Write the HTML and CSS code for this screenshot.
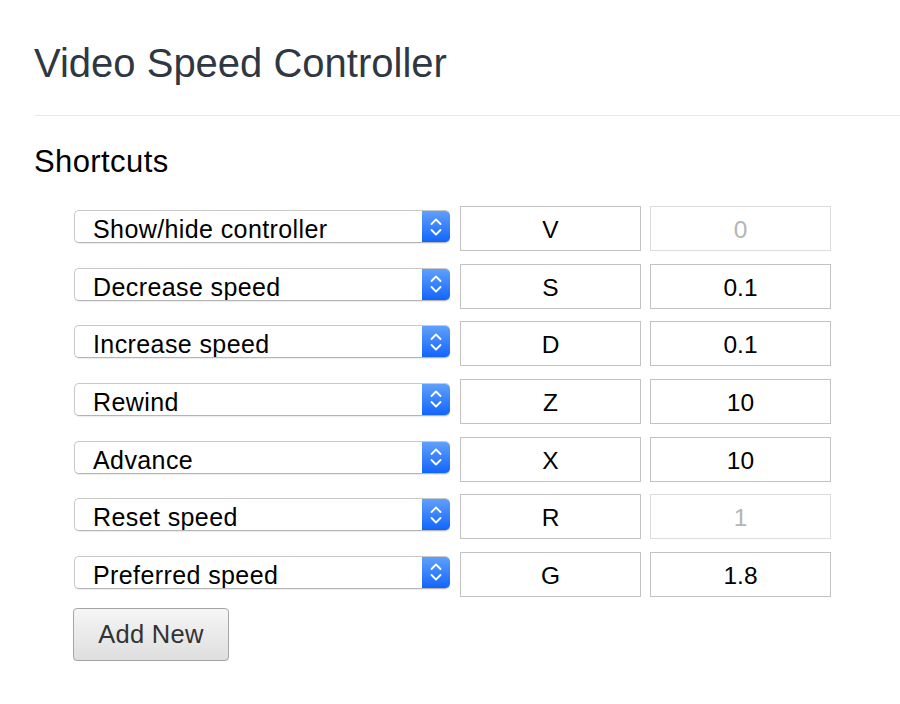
FILE: index.html
```html
<!DOCTYPE html>
<html>
<head>
<meta charset="utf-8">
<link rel="stylesheet" href="styles.css">
</head>
<body>
<div class="page">
  <h1 class="title">Video Speed Controller</h1>
  <div class="rule"></div>
  <h2 class="section">Shortcuts</h2>
  <div class="shortcuts">
    <div class="row">
      <div class="select"><span class="select-label">Show/hide controller</span><span class="select-arrow"><svg width="12" height="20" viewBox="0 0 12 20"><path d="M1.5 7 L6 2.5 L10.5 7 M1.5 13 L6 17.5 L10.5 13" fill="none" stroke="#fff" stroke-width="1.8" stroke-linecap="round" stroke-linejoin="round"/></svg></span></div>
      <div class="field">V</div>
      <div class="field disabled">0</div>
    </div>
    <div class="row">
      <div class="select"><span class="select-label">Decrease speed</span><span class="select-arrow"><svg width="12" height="20" viewBox="0 0 12 20"><path d="M1.5 7 L6 2.5 L10.5 7 M1.5 13 L6 17.5 L10.5 13" fill="none" stroke="#fff" stroke-width="1.8" stroke-linecap="round" stroke-linejoin="round"/></svg></span></div>
      <div class="field">S</div>
      <div class="field">0.1</div>
    </div>
    <div class="row">
      <div class="select"><span class="select-label">Increase speed</span><span class="select-arrow"><svg width="12" height="20" viewBox="0 0 12 20"><path d="M1.5 7 L6 2.5 L10.5 7 M1.5 13 L6 17.5 L10.5 13" fill="none" stroke="#fff" stroke-width="1.8" stroke-linecap="round" stroke-linejoin="round"/></svg></span></div>
      <div class="field">D</div>
      <div class="field">0.1</div>
    </div>
    <div class="row">
      <div class="select"><span class="select-label">Rewind</span><span class="select-arrow"><svg width="12" height="20" viewBox="0 0 12 20"><path d="M1.5 7 L6 2.5 L10.5 7 M1.5 13 L6 17.5 L10.5 13" fill="none" stroke="#fff" stroke-width="1.8" stroke-linecap="round" stroke-linejoin="round"/></svg></span></div>
      <div class="field">Z</div>
      <div class="field">10</div>
    </div>
    <div class="row">
      <div class="select"><span class="select-label">Advance</span><span class="select-arrow"><svg width="12" height="20" viewBox="0 0 12 20"><path d="M1.5 7 L6 2.5 L10.5 7 M1.5 13 L6 17.5 L10.5 13" fill="none" stroke="#fff" stroke-width="1.8" stroke-linecap="round" stroke-linejoin="round"/></svg></span></div>
      <div class="field">X</div>
      <div class="field">10</div>
    </div>
    <div class="row">
      <div class="select"><span class="select-label">Reset speed</span><span class="select-arrow"><svg width="12" height="20" viewBox="0 0 12 20"><path d="M1.5 7 L6 2.5 L10.5 7 M1.5 13 L6 17.5 L10.5 13" fill="none" stroke="#fff" stroke-width="1.8" stroke-linecap="round" stroke-linejoin="round"/></svg></span></div>
      <div class="field">R</div>
      <div class="field disabled">1</div>
    </div>
    <div class="row">
      <div class="select"><span class="select-label">Preferred speed</span><span class="select-arrow"><svg width="12" height="20" viewBox="0 0 12 20"><path d="M1.5 7 L6 2.5 L10.5 7 M1.5 13 L6 17.5 L10.5 13" fill="none" stroke="#fff" stroke-width="1.8" stroke-linecap="round" stroke-linejoin="round"/></svg></span></div>
      <div class="field">G</div>
      <div class="field">1.8</div>
    </div>
    <div class="add-btn">Add New</div>
  </div>
</div>
</body>
</html>
```
FILE: styles.css
```css
html, body {
  margin: 0;
  padding: 0;
  background: #ffffff;
}
body {
  font-family: "Liberation Sans", Arial, Helvetica, sans-serif;
  color: #000;
}
.page {
  padding: 40px 0 0 34px;
}
.title {
  margin: 0;
  font-size: 40px;
  font-weight: normal;
  line-height: 46px;
  color: #2f3842;
}
.rule {
  height: 1px;
  background: #e8e8e8;
  margin-top: 29px;
}
.section {
  margin: 28px 0 0 0;
  font-size: 31px;
  letter-spacing: 0.4px;
  font-weight: normal;
  line-height: 36px;
  color: #000;
}
.shortcuts {
  padding-left: 40px;
  margin-top: 26px;
}
.row {
  display: flex;
  align-items: flex-start;
  height: 45px;
  margin-bottom: 12.67px;
}
.select {
  box-sizing: border-box;
  width: 376px;
  height: 33px;
  margin-top: 4px;
  margin-right: 10px;
  display: flex;
  align-items: stretch;
  border: 1px solid #c9c9c9;
  border-bottom-color: #b5b5b5;
  border-right: none;
  border-radius: 5px;
  background: #fff;
  box-shadow: 0 1px 1px rgba(0,0,0,0.08);
  overflow: hidden;
}
.select-label {
  flex: 1;
  font-size: 25px;
  letter-spacing: 0.4px;
  line-height: 31px;
  padding-top: 3px;
  padding-left: 18px;
  color: #000;
}
.select-arrow {
  width: 28px;
  display: flex;
  align-items: center;
  justify-content: center;
  background: linear-gradient(#62a2fb, #0f63fc);
  margin: -1px 0 -1px 0;
  border-radius: 0 5px 5px 0;
}
.field {
  box-sizing: border-box;
  width: 181px;
  height: 45px;
  margin-right: 9px;
  border: 1px solid #c2c2c2;
  text-align: center;
  font-size: 24.5px;
  line-height: 45px;
  color: #000;
  background: #fff;
}
.field.disabled {
  color: #b5b5b5;
  border-color: #dcdcdc;
}
.add-btn {
  box-sizing: border-box;
  width: 156px;
  height: 53px;
  margin-left: -1px;
  margin-top: -2px;
  border: 1px solid #a6a6a6;
  border-radius: 4px;
  background: linear-gradient(#f6f6f6, #dedede);
  box-shadow: 0 1px 1px rgba(0,0,0,0.1);
  text-align: center;
  font-size: 25.5px;
  letter-spacing: 0.3px;
  line-height: 51px;
  color: #333;
}
```
